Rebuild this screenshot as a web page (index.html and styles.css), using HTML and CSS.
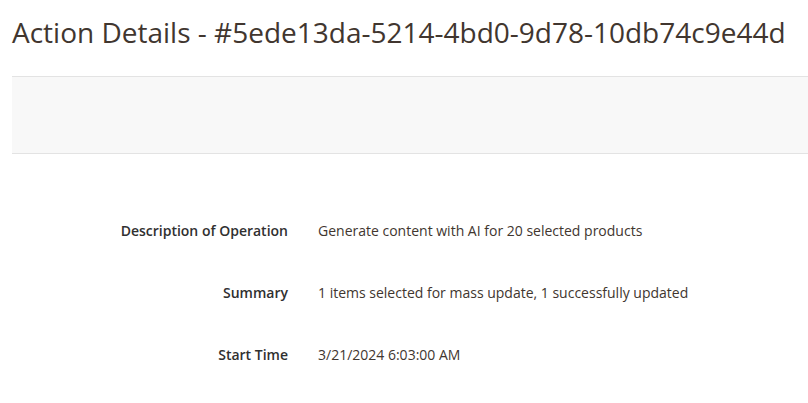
FILE: index.html
```html
<!DOCTYPE html>
<html lang="en">
<head>
<meta charset="utf-8">
<title>Action Details</title>
<link rel="stylesheet" href="styles.css">
</head>
<body>
<div class="page">
  <h1 class="page-title">Action Details - #5ede13da-5214-4bd0-9d78-10db74c9e44d</h1>
  <div class="actions-bar"></div>
  <dl class="details">
    <div class="row">
      <dt>Description of Operation</dt>
      <dd>Generate content with AI for 20 selected products</dd>
    </div>
    <div class="row">
      <dt>Summary</dt>
      <dd>1 items selected for mass update, 1 successfully updated</dd>
    </div>
    <div class="row">
      <dt>Start Time</dt>
      <dd>3/21/2024 6:03:00 AM</dd>
    </div>
  </dl>
</div>
</body>
</html>
```

FILE: styles.css
```css
html, body {
  margin: 0;
  padding: 0;
  background: #ffffff;
}
body {
  font-family: "Open Sans", "Liberation Sans", sans-serif;
  color: #41362f;
  overflow: hidden;
}
.page {
  padding-left: 12px;
}
.page-title {
  margin: 0;
  padding-top: 14px;
  font-size: 28px;
  font-weight: 400;
  line-height: 36px;
  color: #41362f;
  white-space: nowrap;
}
.actions-bar {
  margin-top: 26px;
  height: 76px;
  background: #f8f8f8;
  border-top: 1px solid #e3e3e3;
  border-bottom: 1px solid #e3e3e3;
}
.details {
  margin: 68px 0 0 0;
  padding: 0;
}
.row {
  display: flex;
  align-items: baseline;
  gap: 30px;
  height: 62px;
  font-size: 14px;
  line-height: 18px;
}
.row dt {
  width: 276px;
  text-align: right;
  font-weight: 600;
  color: #303030;
}
.row dd {
  margin: 0;
  color: #41362f;
}
```
